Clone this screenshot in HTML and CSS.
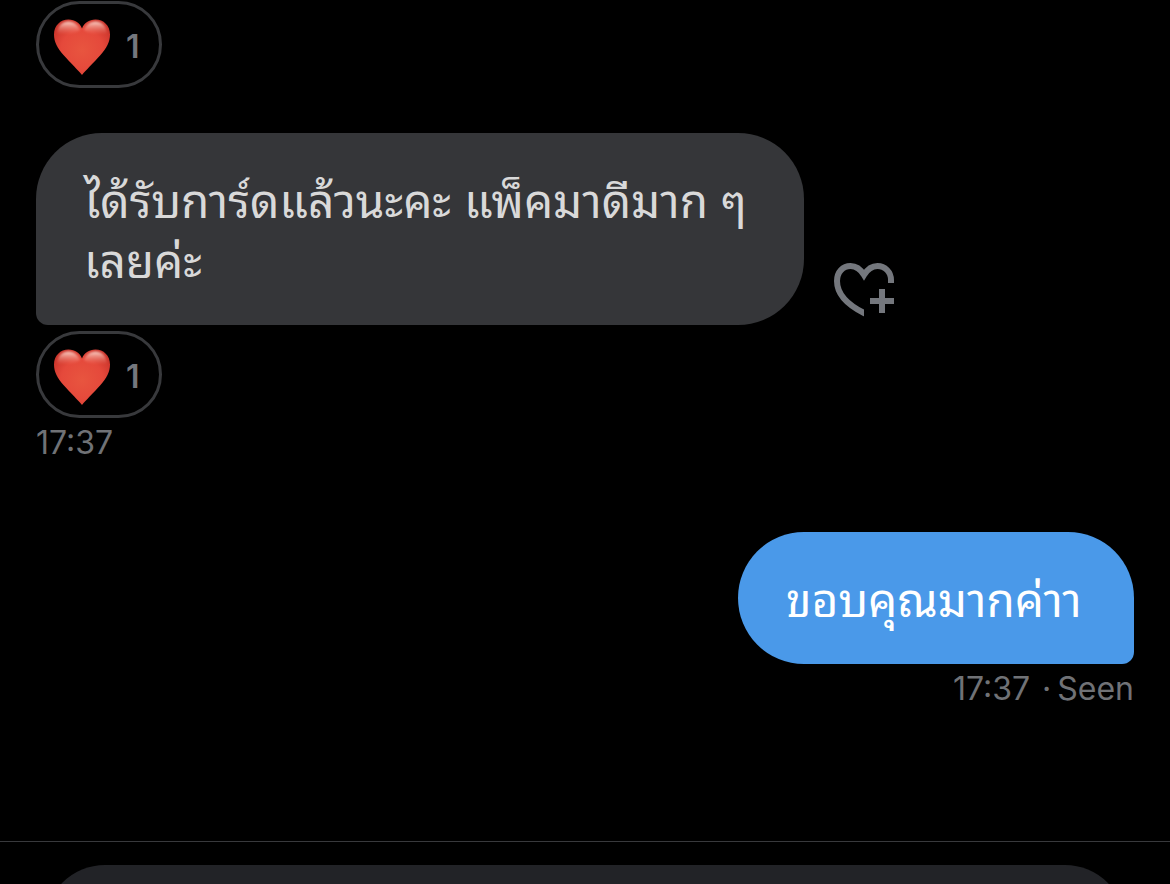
FILE: index.html
```html
<!DOCTYPE html>
<html lang="th">
<head>
    <meta charset="UTF-8">
    <meta name="viewport" content="width=device-width, initial-scale=1.0">
    <title>Messages</title>
    <link rel="stylesheet" href="styles.css">
</head>
<body>
    <!-- shared heart used by the reactions -->
    <svg class="defs" aria-hidden="true">
        <defs>
            <radialGradient id="heartFill" cx="50%" cy="55%" r="62%">
                <stop offset="0" stop-color="#e8553f"/>
                <stop offset="0.6" stop-color="#e5493b"/>
                <stop offset="1" stop-color="#c9332a"/>
            </radialGradient>
            <linearGradient id="heartShine" x1="0" y1="0" x2="0" y2="1">
                <stop offset="0" stop-color="#ffe4dc" stop-opacity="0.9"/>
                <stop offset="1" stop-color="#f58a78" stop-opacity="0"/>
            </linearGradient>
            <filter id="soften" x="-20%" y="-20%" width="140%" height="140%">
                <feGaussianBlur stdDeviation="1"/>
            </filter>
            <clipPath id="heartCut">
                <path d="M0 0H60V20H30V54H0Z"/>
            </clipPath>
            <symbol id="heart" viewBox="0 0 56 56">
                <path fill="url(#heartFill)" d="M28 56C25 52 16 43.500 9.500 36C3.500 29 0 23 0 15.500C0 6.500 6.500 0.500 14.500 0.500C21 0.500 26 4 28 9.500C30 4 35 0.500 41.500 0.500C49.500 0.500 56 6.500 56 15.500C56 23 52.500 29 46.500 36C40 43.500 31 52 28 56Z"/>
                <path fill="url(#heartShine)" filter="url(#soften)" d="M3 14C4 6 9 2.500 14.500 2.500C20 2.500 24 6 26 11C21 15 10 17 3 14ZM30 11C32 6 36 2.500 41.500 2.500C47 2.500 52 6 53 14C46 17 35 15 30 11Z"/>
            </symbol>
        </defs>
    </svg>

    <main class="chat">
        <button class="reaction" type="button" aria-label="Heart, 1 reaction">
            <svg class="heart" aria-hidden="true"><use href="#heart"/></svg>
            <span>1</span>
        </button>

        <div class="message received">
            <p class="bubble">ได้รับการ์ดแล้วนะคะ แพ็คมาดีมาก ๆ<br>เลยค่ะ</p>
            <button class="add-reaction" type="button" aria-label="Add reaction">
                <svg viewBox="0 0 60 54" fill="none" stroke="currentColor" stroke-width="6" aria-hidden="true">
                    <path clip-path="url(#heartCut)" d="M57 24V17C57 9 51 3 43.500 3C37 3 33 7 30 12C27 7 23 3 16.500 3C9 3 3 9 3 18C3 31 14 42 30 50L36 53"/>
                    <path d="M48 26V50M36 38H60"/>
                </svg>
            </button>
        </div>
        <button class="reaction" type="button" aria-label="Heart, 1 reaction">
            <svg class="heart" aria-hidden="true"><use href="#heart"/></svg>
            <span>1</span>
        </button>
        <div class="meta">17:37</div>

        <div class="message sent">
            <p class="bubble">ขอบคุณมากค่าา</p>
        </div>
        <div class="meta meta-sent"><span>17:37</span><span class="dot">·</span><span>Seen</span></div>
    </main>

    <footer class="composer">
        <input class="composer-input" type="text" aria-label="Message">
    </footer>
</body>
</html>
```

FILE: styles.css
```css
* {
    box-sizing: border-box;
}
body {
    margin: 0;
    height: 100vh;
    overflow: hidden;
    background-color: #000;
    color: #d9d9d9;
    font-family: Inter, Thonburi, "Noto Sans Thai Looped", Loma, Garuda, Waree, "Noto Sans", sans-serif;
}
button {
    padding: 0;
    border: none;
    background: none;
    font-family: inherit;
    cursor: pointer;
}
.defs {
    position: absolute;
    width: 0;
    height: 0;
}
.chat {
    display: flex;
    flex-direction: column;
    align-items: flex-start;
    padding: 1px 36px 133px;
}
.message {
    display: flex;
    align-items: flex-end;
    gap: 30px;
}
.received {
    margin: 45px 0 6px;
}
.sent {
    align-self: flex-end;
    margin-top: 70px;
}
.bubble {
    margin: 0;
    padding: 38px 48px 34px;
    border-radius: 66px;
    font-size: 46px;
    line-height: 60px;
}
.received .bubble {
    background-color: #353639;
    border-bottom-left-radius: 12px;
    min-width: 768px;
}
.sent .bubble {
    background-color: #4a99e9;
    color: #fff;
    border-bottom-right-radius: 12px;
    min-width: 396px;
}
.add-reaction {
    height: 54px;
    margin-bottom: 8px;
    color: #74777d;
}
.add-reaction svg {
    display: block;
    width: 60px;
    height: 54px;
}
.reaction {
    display: flex;
    align-items: center;
    gap: 16px;
    width: 126px;
    height: 87px;
    padding: 4px 0 0 15px;
    border: 3px solid #38393c;
    border-radius: 44px;
    color: #74777d;
    font-size: 32px;
    font-weight: 600;
}
.heart {
    width: 56px;
    height: 56px;
}
.meta {
    margin-top: 6px;
    color: #707276;
    font-size: 32px;
    line-height: 38px;
}
.meta-sent {
    display: flex;
    align-self: flex-end;
}
.dot {
    margin: 0 6px 0 12px;
}
.composer {
    padding: 23px 45px;
    border-top: 1px solid #38393c;
}
.composer-input {
    display: block;
    width: 100%;
    height: 120px;
    padding: 0 48px;
    border: none;
    border-radius: 60px;
    background-color: #222327;
    color: #d9d9d9;
    font: inherit;
    font-size: 46px;
}
```
